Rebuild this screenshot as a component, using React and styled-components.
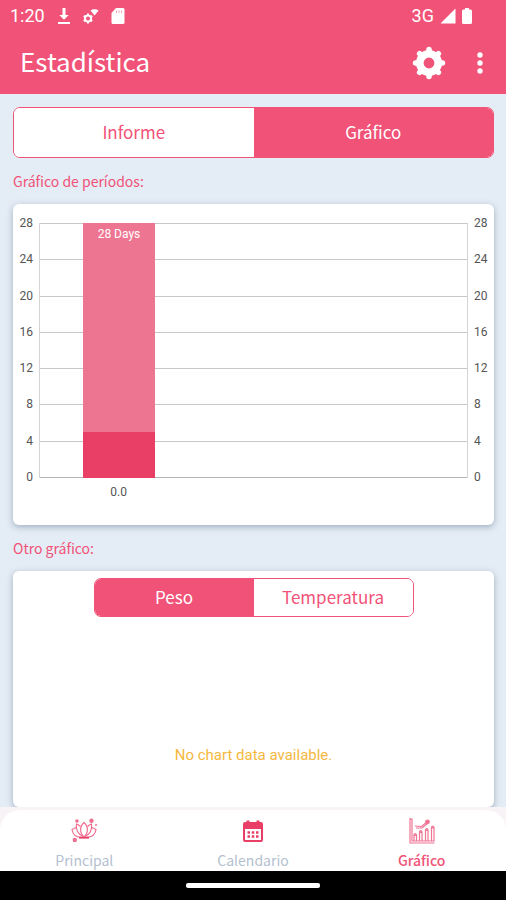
import React, { useState } from 'react';
import styled, { createGlobalStyle, ThemeProvider } from 'styled-components';

const theme = {
  primary: '#f15277',
  primaryDark: '#e93f67',
  primaryLight: '#ee7591',
  background: '#e4ecf5',
  muted: '#b4bfcf',
  titleFont: "'Noto Sans CJK JP', 'Noto Sans', sans-serif",
  bodyFont: "Roboto, 'Liberation Sans', sans-serif",
};

const TICKS = [28, 24, 20, 16, 12, 8, 4, 0];
const MAX_DAYS = 28;

const cycles = [{ label: '0.0', cycle: 28, period: 5 }];

// Icons
const DownloadIcon = () => (
  <svg width="14" height="18" viewBox="0 0 14 18" fill="currentColor" aria-hidden="true">
    <path d="M5.5 1h3v7h3.2L7 12.8 2.3 8h3.2zM1 15h12v2H1z" />
  </svg>
);

const GearWifiIcon = () => (
  <svg width="16" height="16" viewBox="0 0 16 16" fill="currentColor" aria-hidden="true">
    <path d="M7.5 2.6C9.6.8 13.4.8 15.600 2.600L11.500 7.500z" />
    <circle cx="5" cy="10.500" r="3" fill="none" stroke="currentColor" strokeWidth="2" />
    <path
      d="M5 5.500v1.500M5 14v1.500M.7 8l1.500.8M7.800 12.200l1.500.8M.7 13l1.500-.8M7.800 8.800L9.300 8"
      stroke="currentColor"
      strokeWidth="2"
    />
  </svg>
);

const SdCardIcon = () => (
  <svg width="14" height="16" viewBox="0 0 14 16" aria-hidden="true">
    <path d="M5 0h7a1.500 1.500 0 011.500 1.500v13a1.500 1.500 0 01-1.500 1.500H2A1.500 1.500 0 01.5 14.500V5z" fill="#fff" />
    <path d="M5.500 2.500v2.500M8 2.500v2.500M10.500 2.500v2.500" stroke="#f7a5b8" strokeWidth="1" />
  </svg>
);

const SignalIcon = () => (
  <svg width="16" height="16" viewBox="0 0 16 16" fill="currentColor" aria-hidden="true">
    <path d="M15.500.5v15H.5z" />
  </svg>
);

const BatteryIcon = () => (
  <svg width="10" height="16" viewBox="0 0 10 16" fill="currentColor" aria-hidden="true">
    <path d="M3 0h4v1.500h1.500A1.500 1.500 0 0110 3v11.500A1.500 1.500 0 018.500 16h-7A1.500 1.500 0 010 14.500V3a1.500 1.500 0 011.500-1.500H3z" />
  </svg>
);

const GearIcon = () => (
  <svg width="34" height="34" viewBox="0 0 34 34" aria-hidden="true">
    <g fill="none" stroke="currentColor">
      <circle cx="17" cy="17" r="9.200" strokeWidth="7.600" />
      <g strokeWidth="5.500" strokeLinecap="round">
        <path d="M17 3.500v3M17 27.500v3M3.500 17h3M27.500 17h3M7.600 7.600l1.400 1.400M25 25l1.400 1.400M7.600 26.400l1.400-1.400M25 9l1.400-1.400" />
      </g>
    </g>
  </svg>
);

const DotsIcon = () => (
  <svg width="6" height="22" viewBox="0 0 6 22" fill="currentColor" aria-hidden="true">
    <circle cx="3" cy="3" r="2.700" />
    <circle cx="3" cy="11" r="2.700" />
    <circle cx="3" cy="19" r="2.700" />
  </svg>
);

const LotusIcon = () => (
  <svg width="26" height="26" viewBox="0 0 26 26" fill="none" stroke="#ef6f90" strokeWidth="1.200" aria-hidden="true">
    <path d="M13 4.500c4.500 4 4.500 10.500 0 14.500-4.500-4-4.500-10.500 0-14.500z" />
    <path d="M9.500 8.500C8.300 7.300 7 6.500 5.500 6c-1 5.500 1.500 11 7.500 13M16.500 8.500c1.200-1.200 2.500-2 4-2.500 1 5.500-1.500 11-7.500 13" />
    <path d="M5.300 9.500L1 11.500c.8 5 4.500 8.500 12 7.500M20.700 9.500l4.300 2c-.8 5-4.500 8.500-12 7.500" />
    <path d="M8 19.800h10" stroke="#e93f67" strokeWidth="1.600" />
    <g fill="#ef6f90" stroke="none">
      <circle cx="6" cy="3" r="1.800" />
      <circle cx="20.500" cy="2.700" r="2.200" />
      <circle cx="3.800" cy="22" r="2.200" />
      <circle cx="25" cy="7" r="1" />
    </g>
  </svg>
);

const CalendarIcon = () => (
  <svg width="22" height="24" viewBox="0 0 22 24" aria-hidden="true">
    <rect x="2" y="4" width="18" height="18" rx="1" fill="#fff" stroke="currentColor" strokeWidth="2" />
    <path d="M2 4h18v6H2zM4.500 1.500h3V5h-3zM14.500 1.500h3V5h-3z" fill="currentColor" />
    <path d="M5.500 13.500h11M5.500 17.500h11" stroke="currentColor" strokeWidth="2.500" strokeDasharray="2.500 1.750" />
  </svg>
);

const ChartIcon = () => (
  <svg width="26" height="26" viewBox="0 0 26 26" fill="none" stroke="#ef7594" strokeWidth="1.200" aria-hidden="true">
    <path d="M1 0v25H25.500M1 1h2v22h22.500" />
    <path d="M5 23v-6h2.500v6M10.500 23v-9H13v9M16.500 23V12H19v11M22.500 23V9.500H25V23" />
    <circle cx="6.200" cy="16.500" r="1" />
    <circle cx="11.700" cy="13.500" r="1" />
    <circle cx="17.700" cy="11.500" r="1" />
    <circle cx="23.700" cy="9" r="1" />
    <path d="M6 8l6.500.5 6-5M7 10h6l5.500-4.500" />
    <circle cx="18.500" cy="3.800" r="1.800" fill="#ef6f90" />
  </svg>
);

const navItems = [
  { name: 'Principal', Icon: LotusIcon },
  { name: 'Calendario', Icon: CalendarIcon },
  { name: 'Gráfico', Icon: ChartIcon },
];

const Segmented = ({ options, value, onChange, compact, label }) => (
  <SegmentGroup role="group" aria-label={label} $compact={compact}>
    {options.map(option => (
      <Segment
        key={option}
        type="button"
        $active={option === value}
        aria-pressed={option === value}
        onClick={() => onChange(option)}
      >
        {option}
      </Segment>
    ))}
  </SegmentGroup>
);

const Axis = ({ right }) => (
  <AxisLabels $right={right}>
    {TICKS.map(tick => <span key={tick}>{tick}</span>)}
  </AxisLabels>
);

const CycleChart = () => (
  <ChartGrid>
    <Axis />
    <Plot>
      {TICKS.map(tick => <GridLine key={tick} $base={tick === 0} />)}
      {cycles.map(({ label, cycle, period }) => (
        <Bar key={label} style={{ height: `${(cycle / MAX_DAYS) * 100}%` }}>
          <BarText>{cycle} Days</BarText>
          <PeriodPart style={{ height: `${(period / cycle) * 100}%` }} />
        </Bar>
      ))}
    </Plot>
    <Axis right />
    <XLabels>
      {cycles.map(({ label }) => <XLabel key={label}>{label}</XLabel>)}
    </XLabels>
  </ChartGrid>
);

const App = () => {
  const [view, setView] = useState('Gráfico');
  const [metric, setMetric] = useState('Peso');
  const [page, setPage] = useState('Gráfico');

  return (
    <ThemeProvider theme={theme}>
      <GlobalStyle />
      <Screen>
        <Header>
          <StatusBar>
            <StatusGroup $gap="12px">
              <span>1:20</span>
              <DownloadIcon />
              <GearWifiIcon />
              <SdCardIcon />
            </StatusGroup>
            <StatusGroup $gap="6px">
              <span>3G</span>
              <SignalIcon />
              <BatteryIcon />
            </StatusGroup>
          </StatusBar>
          <Toolbar>
            <Title>Estadística</Title>
            <IconButton type="button" aria-label="Ajustes"><GearIcon /></IconButton>
            <IconButton type="button" aria-label="Más opciones"><DotsIcon /></IconButton>
          </Toolbar>
        </Header>

        <Content>
          <Segmented
            label="Vista"
            options={['Informe', 'Gráfico']}
            value={view}
            onChange={setView}
          />
          <SectionTitle>Gráfico de períodos:</SectionTitle>
          <Card>
            <CycleChart />
          </Card>
          <SectionTitle>Otro gráfico:</SectionTitle>
          <Card $fill>
            <Segmented
              compact
              label="Medida"
              options={['Peso', 'Temperatura']}
              value={metric}
              onChange={setMetric}
            />
            <EmptyChart>No chart data available.</EmptyChart>
          </Card>
        </Content>

        <NavWrapper>
          <Nav>
            {navItems.map(({ name, Icon }) => (
              <NavLink
                key={name}
                href="#"
                $active={name === page}
                onClick={() => setPage(name)}
              >
                <NavIcon><Icon /></NavIcon>
                {name}
              </NavLink>
            ))}
          </Nav>
        </NavWrapper>
        <SystemBar><HomeHandle /></SystemBar>
      </Screen>
    </ThemeProvider>
  );
};

const GlobalStyle = createGlobalStyle`
  *, *::before, *::after {
    box-sizing: border-box;
  }

  body {
    margin: 0;
    background: ${theme.background};
    font-family: ${theme.titleFont};
  }
`;

const Screen = styled.div`
  display: flex;
  flex-direction: column;
  height: 100vh;
  background: ${props => props.theme.background};
`;

const Header = styled.header`
  flex: none;
  background: ${props => props.theme.primary};
  color: #fff;
`;

const StatusBar = styled.div`
  display: flex;
  justify-content: space-between;
  padding: 4px 34px 4px 10px;
  font: 400 18px/24px ${props => props.theme.bodyFont};
`;

const StatusGroup = styled.div`
  display: flex;
  align-items: center;
  gap: ${props => props.$gap};
`;

const Toolbar = styled.div`
  display: flex;
  align-items: center;
  height: 62px;
  padding: 0 16px 0 20px;
`;

const Title = styled.h1`
  flex: 1;
  margin: 0;
  padding-bottom: 4px;
  font-size: 26px;
  font-weight: 400;
  line-height: 36px;
`;

const IconButton = styled.button`
  display: flex;
  align-items: center;
  justify-content: center;
  min-width: 20px;
  height: 40px;
  margin-left: 24px;
  padding: 0;
  border: 0;
  background: none;
  color: #fff;
  cursor: pointer;
`;

const Content = styled.main`
  display: flex;
  flex: 1;
  flex-direction: column;
  min-height: 0;
  padding: 13px 12px 0 13px;
  overflow: hidden;
`;

const SegmentGroup = styled.div`
  display: flex;
  flex: none;
  width: 100%;
  max-width: ${props => props.$compact ? '320px' : 'none'};
  height: ${props => props.$compact ? '39px' : '51px'};
  margin: 0 auto;
  border: 1px solid ${props => props.theme.primary};
  border-radius: 7px;
  background: #fff;
  overflow: hidden;
`;

const Segment = styled.button`
  flex: 1;
  padding: 0 0 2px;
  border: 0;
  background: ${props => props.$active ? props.theme.primary : '#fff'};
  color: ${props => props.$active ? '#fff' : props.theme.primary};
  font-family: inherit;
  font-size: 17px;
  line-height: 28px;
  cursor: pointer;
`;

const SectionTitle = styled.h2`
  flex: none;
  margin: 0;
  padding: 11px 0;
  color: ${props => props.theme.primary};
  font-size: 14px;
  font-weight: 400;
  line-height: 24px;
`;

const Card = styled.section`
  display: flex;
  flex: ${props => props.$fill ? '1' : 'none'};
  flex-direction: column;
  padding: ${props => props.$fill ? '7px 0 0' : '10px 0 27px'};
  border-radius: 6px;
  background: #fff;
  box-shadow: 0 2px 6px rgba(90, 115, 140, 0.5);
`;

const ChartGrid = styled.div`
  display: grid;
  grid-template-columns: 26px 1fr 26px;
  color: #555;
  font: 400 12px/18px ${props => props.theme.bodyFont};
`;

const AxisLabels = styled.div`
  display: flex;
  flex-direction: column;
  justify-content: space-between;
  height: 272px;
  padding: ${props => props.$right ? '0 0 0 6px' : '0 6px 0 0'};
  text-align: ${props => props.$right ? 'left' : 'right'};
`;

const Plot = styled.div`
  position: relative;
  display: flex;
  flex-direction: column;
  justify-content: space-between;
  margin: 9px 0 8px;
  border: solid #d4d4d4;
  border-width: 0 1px;
`;

const GridLine = styled.div`
  height: 1px;
  background: ${props => props.$base ? '#b4b4b4' : '#c8c8c8'};
`;

const Bar = styled.div`
  position: absolute;
  bottom: 0;
  left: 10%;
  display: flex;
  flex-direction: column;
  justify-content: space-between;
  width: 17%;
  background: ${props => props.theme.primaryLight};
`;

const BarText = styled.span`
  padding-top: 2px;
  color: #fff;
  text-align: center;
`;

const PeriodPart = styled.div`
  background: ${props => props.theme.primaryDark};
`;

const XLabels = styled.div`
  grid-column: 2;
  padding-left: 10%;
`;

const XLabel = styled.div`
  width: 19%;
  height: 12px;
  line-height: 12px;
  text-align: center;
`;

const EmptyChart = styled.p`
  margin: 128px 0 0;
  color: #f5b841;
  text-align: center;
  font: 400 15px/20px ${props => props.theme.bodyFont};
`;

const NavWrapper = styled.div`
  z-index: 1;
  flex: none;
  padding-top: 3px;
  background: #f7f3f6;
`;

const Nav = styled.nav`
  display: flex;
  height: 61px;
  border-radius: 20px 20px 0 0;
  background: #fff;
`;

const NavLink = styled.a`
  display: flex;
  flex: 1;
  flex-direction: column;
  align-items: center;
  padding-top: 8px;
  color: ${props => props.$active ? props.theme.primary : props.theme.muted};
  font-size: 14px;
  font-weight: ${props => props.$active ? '500' : '400'};
  line-height: 20px;
  text-decoration: none;
`;

const NavIcon = styled.span`
  display: flex;
  align-items: center;
  height: 26px;
  margin-bottom: 6px;
  color: ${props => props.theme.primaryDark};
`;

const SystemBar = styled.div`
  display: flex;
  flex: none;
  align-items: center;
  justify-content: center;
  height: 29px;
  background: #000;
`;

const HomeHandle = styled.div`
  width: 134px;
  height: 5px;
  border-radius: 2px;
  background: #fff;
`;

export default App;
